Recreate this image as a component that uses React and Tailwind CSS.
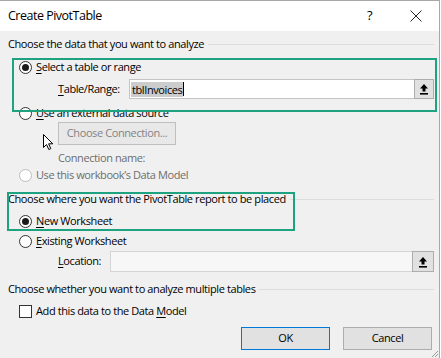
import React from "react";

const U = ({ children }) => <span className="underline underline-offset-2">{children}</span>;

const Radio = ({ checked }) => (
  <span className="w-[13px] h-[13px] rounded-full border border-[#333] bg-white flex items-center justify-center shrink-0">
    {checked && <span className="w-[7px] h-[7px] rounded-full bg-[#1a1a1a]" />}
  </span>
);

const Collapse = () => (
  <svg width="10" height="12" viewBox="0 0 10 12">
    <path d="M5 1 L9 5.5 L6.5 5.5 L6.5 8.5 L3.5 8.5 L3.5 5.5 L1 5.5 Z" fill="#000" />
    <rect x="1" y="10" width="8" height="1.6" fill="#000" />
  </svg>
);

const Header = ({ children }) => (
  <div className="h-[16px] flex items-center gap-[4px]">
    <span className="whitespace-nowrap">{children}</span>
    <span className="flex-1 h-px bg-[#dcdcdc]" />
  </div>
);

export default function App() {
  return (
    <div
      className="w-[441px] h-[358px] bg-white relative overflow-hidden text-[11px] tracking-[-0.4px] text-black"
      style={{ fontFamily: '"Open Sans", "Noto Sans", sans-serif' }}
    >
      <div className="w-[440px] h-[358px] border-t border-r border-[#a8a8a8] flex flex-col">
        {/* title bar */}
        <div className="h-[30px] bg-white flex items-center pl-[8px] shrink-0">
          <span className="text-[12.5px] tracking-[-0.5px] flex-1">Create PivotTable</span>
          <span className="text-[13px] w-[12px] mr-[31px]">?</span>
          <svg width="12" height="12" viewBox="0 0 12 12" className="mr-[17px]">
            <path d="M0.5 0.5 L11.5 11.5 M11.5 0.5 L0.5 11.5" stroke="#222" strokeWidth="1" />
          </svg>
        </div>

        {/* body */}
        <div className="flex-1 bg-[#f0f0f0] relative pl-[8px] pr-[5px] pt-[5px] flex flex-col">
          <Header>Choose the data that you want to analyze</Header>

          <div className="h-[16px] mt-[7px] flex items-center gap-[4px] pl-[11px]">
            <Radio checked />
            <span><U>S</U>elect a table or range</span>
          </div>

          <div className="h-[20px] mt-[4px] flex items-center pl-[50px]">
            <span className="w-[71px]"><U>T</U>able/Range:</span>
            <div className="flex-1 h-[20px] bg-white border border-[#c4c4c4] flex items-center">
              <span className="ml-[1px] bg-[#cccccc] px-[1px] leading-[15px]">tblInvoices</span>
              <span className="w-px h-[14px] bg-black" />
              <span className="flex-1" />
              <span className="w-[20px] h-[20px] -mr-px border border-[#adadad] bg-[#e1e1e1] flex items-center justify-center">
                <Collapse />
              </span>
            </div>
          </div>

          <div className="h-[16px] mt-[6px] flex items-center gap-[4px] pl-[11px]">
            <Radio />
            <span><U>U</U>se an external data source</span>
          </div>

          <div className="mt-[1px] pl-[50px]">
            <div className="w-[118px] h-[23px] border border-[#bfbfbf] bg-[#e8e8e8] text-[#838383] flex items-center justify-center">
              Choose Connection...
            </div>
          </div>

          <div className="h-[16px] mt-[5px] flex items-center pl-[50px] text-[#6d6d6d]">Connection name:</div>

          <div className="h-[16px] mt-[1px] flex items-center gap-[4px] pl-[11px] text-[#6d6d6d]">
            <span className="w-[13px] h-[13px] rounded-full border border-[#bcbcbc] bg-white shrink-0" />
            <span>Use this workbook’s Data Model</span>
          </div>

          <div className="mt-[8px]">
            <Header>Choose where you want the PivotTable report to be placed</Header>
          </div>

          <div className="h-[16px] mt-[6px] flex items-center gap-[4px] pl-[11px]">
            <Radio checked />
            <span><U>N</U>ew Worksheet</span>
          </div>

          <div className="h-[16px] mt-[4px] flex items-center gap-[4px] pl-[11px]">
            <Radio />
            <span><U>E</U>xisting Worksheet</span>
          </div>

          <div className="h-[21px] mt-[2px] flex items-center pl-[50px]">
            <span className="w-[52px]"><U>L</U>ocation:</span>
            <div className="flex-1 h-[21px] bg-[#f7f7f7] border border-[#d4d4d4] flex items-center">
              <span className="flex-1" />
              <span className="w-[22px] h-[21px] -mr-px border border-[#adadad] bg-[#e1e1e1] flex items-center justify-center">
                <Collapse />
              </span>
            </div>
          </div>

          <div className="mt-[9px]">
            <Header>Choose whether you want to analyze multiple tables</Header>
          </div>

          <div className="h-[16px] mt-[6px] flex items-center gap-[4px] pl-[11px]">
            <span className="w-[13px] h-[13px] border border-[#333] bg-white shrink-0" />
            <span>Add this data to the Data <U>M</U>odel</span>
          </div>

          <div className="mt-[8px] flex justify-end gap-[13px] pr-[2px]">
            <div className="w-[89px] h-[23px] border border-[#0078d7] bg-[#e1e1e1] flex items-center justify-center">OK</div>
            <div className="w-[89px] h-[23px] border border-[#adadad] bg-[#e1e1e1] flex items-center justify-center">Cancel</div>
          </div>

          {/* resize grip */}
          <svg width="8" height="8" viewBox="0 0 8 8" className="absolute right-0 bottom-0">
            <path d="M7 1 L1 7 M7 4 L4 7" stroke="#9a9a9a" strokeWidth="1" />
          </svg>
        </div>
      </div>

      {/* annotation boxes */}
      <div className="absolute left-[12px] top-[58px] w-[425px] h-[54px] border-2 border-[#1ea381] pointer-events-none" />
      <div className="absolute left-[7px] top-[192px] w-[288px] h-[39px] border-2 border-[#1ea381] pointer-events-none" />

      {/* mouse cursor */}
      <svg width="12" height="18" viewBox="0 0 12 18" className="absolute left-[43px] top-[134px]">
        <path d="M0.5 0.5 L0.5 13.5 L3.5 10.5 L5.8 15.5 L7.8 14.6 L5.6 9.8 L9.8 9.8 Z" fill="#fff" stroke="#000" strokeWidth="1" strokeLinejoin="round" />
      </svg>
    </div>
  );
}
